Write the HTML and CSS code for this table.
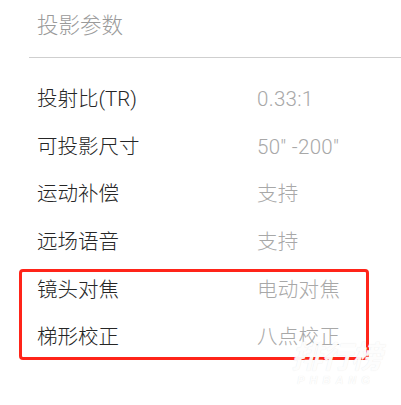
FILE: index.html
```html
<!DOCTYPE html>
<html lang="zh">
<head>
<meta charset="utf-8">
<link rel="stylesheet" href="styles.css">
</head>
<body>
<div class="page">
  <div class="title">投影参数</div>
  <div class="rows">
    <div class="row"><span class="label">投射比(TR)</span><span class="value">0.33:1</span></div>
    <div class="row"><span class="label">可投影尺寸</span><span class="value">50" -200"</span></div>
    <div class="row"><span class="label">运动补偿</span><span class="value">支持</span></div>
    <div class="row"><span class="label">远场语音</span><span class="value">支持</span></div>
    <div class="highlight">
      <div class="row row-a"><span class="label">镜头对焦</span><span class="value">电动对焦</span></div>
      <div class="row row-b"><span class="label">梯形校正</span><span class="value">八点校正</span></div>
    </div>
  </div>
  <div class="watermark">
    <div class="wm-cn">排行榜</div>
    <div class="wm-en">PHBANG</div>
  </div>
</div>
</body>
</html>
```
FILE: styles.css
```css
html, body {
  margin: 0;
  padding: 0;
  background: #ffffff;
}
body {
  font-family: Roboto, "Noto Sans CJK SC", sans-serif;
  font-weight: 300;
  width: 401px;
  height: 405px;
  overflow: hidden;
}
.page {
  position: relative;
  width: 401px;
  height: 405px;
}
.title {
  margin-left: 29px;
  padding-left: 8px;
  height: 52px;
  line-height: 52px;
  padding-bottom: 5px;
  border-bottom: 1px solid #cfcfcf;
  font-size: 21.5px;
  color: #9a9a9a;
}
.rows {
  padding-top: 18px;
}
.row {
  display: flex;
  height: 47.5px;
  line-height: 47.5px;
  padding-left: 37px;
  font-size: 20.5px;
}
.label {
  width: 220px;
  color: #262626;
}
.value {
  color: #a8a8a8;
  letter-spacing: 0.3px;
}
.highlight {
  margin-top: 2.5px;
  margin-left: 19px;
  width: 344px;
  border: 3px solid #ff2419;
  border-radius: 4px;
  padding-bottom: 2px;
}
.highlight .row {
  padding-left: 15px;
  height: 36px;
  line-height: 36px;
}
.highlight .row-b {
  margin-top: 11px;
}
.watermark {
  position: absolute;
  left: 283px;
  top: 336px;
  width: 106px;
  font-style: italic;
  font-weight: bold;
  color: rgba(255, 255, 255, 0.95);
  text-shadow: 0 0 1px rgba(0, 0, 0, 0.1);
  text-align: center;
}
.wm-cn {
  font-family: "Noto Sans CJK SC", sans-serif;
  font-size: 31px;
  line-height: 38px;
  letter-spacing: -1px;
}
.wm-en {
  font-family: "Liberation Sans", sans-serif;
  font-size: 11px;
  line-height: 12px;
  letter-spacing: 5px;
}
```
